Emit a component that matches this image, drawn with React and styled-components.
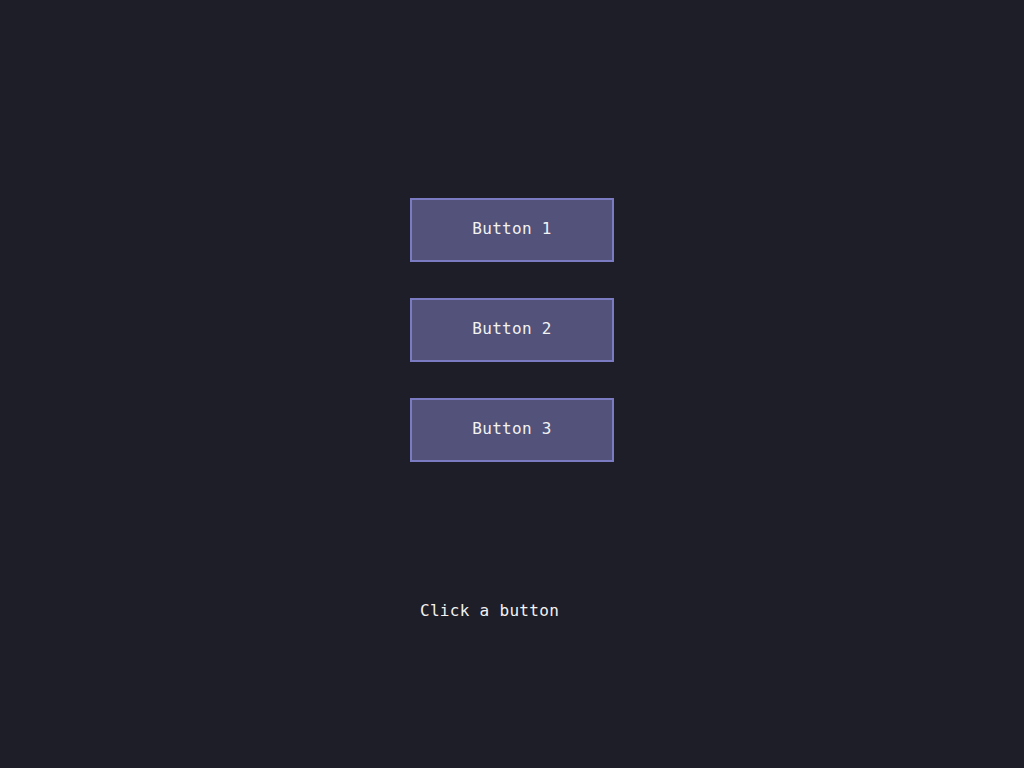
import React, { useState } from "react";
import styled, { createGlobalStyle } from "styled-components";

const Global = createGlobalStyle`
  html, body {
    margin: 0;
    padding: 0;
    background: #1e1e28;
  }
  body {
    font-family: "DejaVu Sans Mono", "Liberation Mono", monospace;
  }
`;

const Page = styled.div`
  min-height: 768px;
  display: flex;
  justify-content: center;
  padding-top: 198px;
  box-sizing: border-box;
`;

const Column = styled.div`
  width: 204px;
  display: flex;
  flex-direction: column;
`;

const ButtonList = styled.div`
  display: flex;
  flex-direction: column;
  gap: 36px;
`;

const Button = styled.button`
  width: 204px;
  height: 64px;
  box-sizing: border-box;
  border: 2px solid #7b7bc2;
  background: #52527a;
  color: #f2f2f2;
  font-family: "DejaVu Sans Mono", "Liberation Mono", monospace;
  font-size: 16px;
  letter-spacing: 0.3px;
  cursor: pointer;
  padding: 0 0 4px;
`;

const Status = styled.div`
  margin-top: 137px;
  padding-left: 10px;
  color: #f2f2f2;
  font-size: 16px;
  letter-spacing: 0.3px;
  line-height: 24px;
  white-space: nowrap;
`;

export default function App() {
  const [msg, setMsg] = useState("Click a button");
  const buttons = ["Button 1", "Button 2", "Button 3"];
  return (
    <>
      <Global />
      <Page>
        <Column>
          <ButtonList>
            {buttons.map((b) => (
              <Button key={b} onClick={() => setMsg("You clicked " + b)}>
                {b}
              </Button>
            ))}
          </ButtonList>
          <Status>{msg}</Status>
        </Column>
      </Page>
    </>
  );
}
